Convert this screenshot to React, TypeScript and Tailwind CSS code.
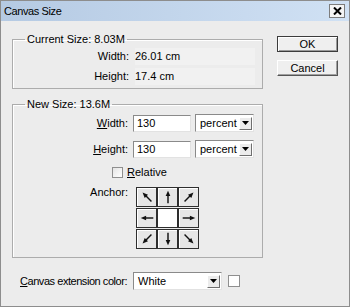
import React from "react";

const sunken = "border border-t-[#8a8a8a] border-l-[#8a8a8a] border-b-[#e2e2e2] border-r-[#e2e2e2]";

function DropArrow() {
  return (
    <div className="flex h-[13px] w-[13px] items-center justify-center border border-t-white border-l-white border-b-[#6f6f6f] border-r-[#6f6f6f] bg-[#ececec]">
      <svg width="7" height="4" viewBox="0 0 7 4">
        <polygon points="0,0 7,0 3.5,4" fill="#000" />
      </svg>
    </div>
  );
}

function Select({ value, width }: { value: string; width: string }) {
  return (
    <div className={`flex h-[18px] items-center justify-between bg-white pl-[4px] pr-[1px] ${width} ${sunken}`}>
      <span>{value}</span>
      <DropArrow />
    </div>
  );
}

function Arrow({ angle }: { angle: number }) {
  return (
    <svg width="18" height="18" viewBox="0 0 20 20">
      <g transform={`rotate(${angle} 10 10)`}>
        <line x1="10" y1="17" x2="10" y2="7" stroke="#111" strokeWidth="1.6" />
        <polygon points="10,3 7.4,9 12.6,9" fill="#111" />
      </g>
    </svg>
  );
}

const anchors: (number | null)[] = [-45, 0, 45, -90, null, 90, -135, 180, 135];

export default function App() {
  return (
    <div className="flex h-[307px] w-[350px] flex-col border border-[#8d8d8d] bg-[#ececec] font-['Liberation_Sans',Arial,sans-serif] text-[11px] leading-[13px] text-black">
      {/* title bar */}
      <div className="flex h-[20px] items-center justify-between bg-gradient-to-r from-[#b5cae3] to-[#d0e1f4] pl-[3px] pr-[4px]">
        <span className="text-[11px] tracking-[-0.4px]">Canvas Size</span>
        <div className="flex h-[14px] w-[16px] items-center justify-center border border-[#7d7d7d] bg-[#f4f4f4]">
          <svg width="9" height="8" viewBox="0 0 9 8">
            <path d="M1 0.5 L8 7.5 M8 0.5 L1 7.5" stroke="#000" strokeWidth="2" />
          </svg>
        </div>
      </div>

      <div className="flex pl-[11px] pt-[12px]">
        {/* left column */}
        <div className="flex w-[251px] flex-col">
          <fieldset className="border border-[#acacac] pb-[2px] shadow-[inset_1px_1px_0_#fff]">
            <legend className="ml-[12px] px-[2px]">Current Size: 8.03M</legend>
            <div className="flex h-[20px] items-center">
              <span className="w-[116px] text-right">Width:</span>
              <span className="ml-[6px] flex h-[17px] w-[120px] items-center bg-[#f1f1f1]">26.01 cm</span>
            </div>
            <div className="flex h-[20px] items-center">
              <span className="w-[116px] text-right">Height:</span>
              <span className="ml-[6px] flex h-[17px] w-[120px] items-center bg-[#f1f1f1]">17.4 cm</span>
            </div>
          </fieldset>

          <fieldset className="mt-[9px] border border-[#acacac] pb-[8px] shadow-[inset_1px_1px_0_#fff]">
            <legend className="ml-[12px] px-[2px]">New Size: 13.6M</legend>
            <div className="mt-[3px] flex flex-col gap-[8px]">
              <div className="flex items-center">
                <span className="w-[115px] text-right">
                  <u>W</u>idth:
                </span>
                <div className={`ml-[5px] flex h-[17px] w-[58px] items-center bg-white pl-[3px] ${sunken}`}>130</div>
                <div className="ml-[4px]">
                  <Select value="percent" width="w-[59px]" />
                </div>
              </div>
              <div className="flex items-center">
                <span className="w-[115px] text-right">
                  <u>H</u>eight:
                </span>
                <div className={`ml-[5px] flex h-[17px] w-[58px] items-center bg-white pl-[3px] ${sunken}`}>130</div>
                <div className="ml-[4px]">
                  <Select value="percent" width="w-[59px]" />
                </div>
              </div>
              <div className="flex items-center pl-[99px]">
                <div className="h-[11px] w-[11px] border border-[#8f8f8f] bg-gradient-to-br from-[#e4e4e4] to-white" />
                <span className="ml-[4px]">
                  <u>R</u>elative
                </span>
              </div>
              <div className="flex items-start">
                <span className="mt-[-1px] w-[115px] text-right">Anchor:</span>
                <div className="ml-[8px] grid grid-cols-[repeat(3,21px)] gap-y-[1px]">
                  {anchors.map((a, i) => (
                    <div
                      key={i}
                      className={`flex h-[20px] w-[21px] items-center justify-center border border-[#2e2e2e] ${
                        a === null ? "bg-white" : "bg-[#e6e6e6] shadow-[inset_1px_1px_0_#fff]"
                      }`}
                    >
                      {a !== null && <Arrow angle={a} />}
                    </div>
                  ))}
                </div>
              </div>
            </div>
          </fieldset>

          <div className="mt-[14px] flex items-center pl-[8px]">
            <span className="w-[113px] whitespace-nowrap tracking-[-0.45px]">
              <u>C</u>anvas extension color:
            </span>
            <Select value="White" width="w-[89px]" />
            <div className="ml-[6px] h-[12px] w-[12px] border border-[#8f8f8f] bg-white" />
          </div>
        </div>

        {/* buttons */}
        <div className="ml-[14px] flex flex-col gap-[8px] pt-[3px]">
          <button className="flex h-[16px] w-[61px] items-center justify-center border border-[#3c3c3c] bg-[#efefef] shadow-[inset_1px_1px_0_#fff,inset_-1px_-1px_0_#9a9a9a]">
            OK
          </button>
          <button className="flex h-[16px] w-[61px] items-center justify-center border border-t-white border-l-white border-b-[#555] border-r-[#555] bg-[#efefef] shadow-[inset_-1px_-1px_0_#a0a0a0]">
            Cancel
          </button>
        </div>
      </div>
    </div>
  );
}
